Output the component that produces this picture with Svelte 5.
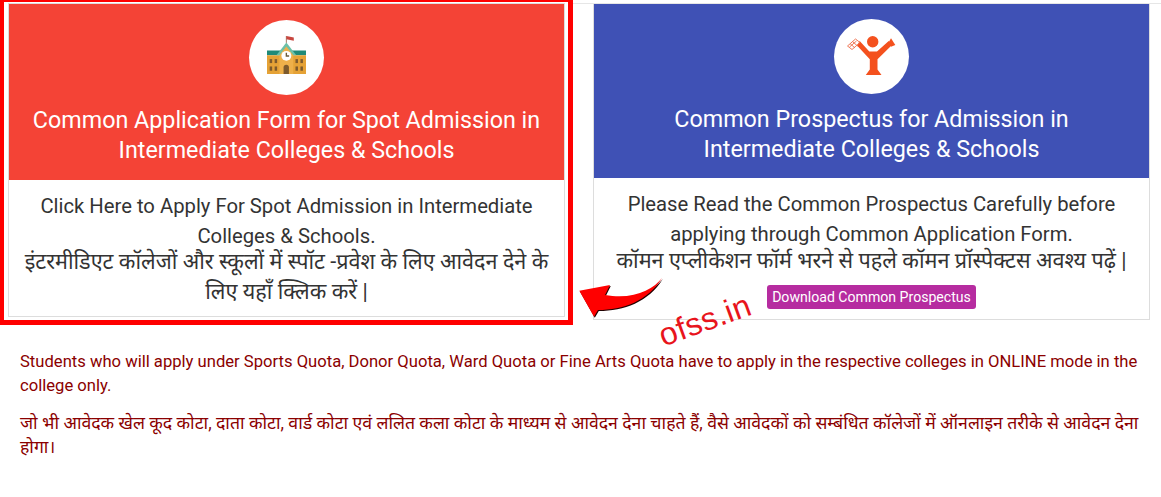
<script>
	const notes = [
		'Students who will apply under Sports Quota, Donor Quota, Ward Quota or Fine Arts Quota have to apply in the respective colleges in ONLINE mode in the college only.',
		'जो भी आवेदक खेल कूद कोटा, दाता कोटा, वार्ड कोटा एवं ललित कला कोटा के माध्यम से आवेदन देना चाहते हैं, वैसे आवेदकों को सम्बंधित कॉलेजों में ऑनलाइन तरीके से आवेदन देना होगा।'
	];
</script>

<div class="page">
	<div class="cards">
		<div class="frame">
			<div class="card">
				<div class="head red">
					<div class="circle">
						<svg class="school" width="39" height="38" viewBox="0 0 39.300 38.300">
							<path d="M19.500 0v7" stroke="#8a5a44" stroke-width="0.800" />
							<path d="M19.500 0l7.500 1.500v3.200l-7.500-1.500z" fill="#c8463f" />
							<path d="M0 14.500h39.300v5h-39.300z" fill="#1f8a78" />
							<path d="M0 19.500h39.300v18.800h-39.300z" fill="#e5a236" />
							<path d="M9.500 19.500l10-13 10 13z" fill="#6cc0a8" />
							<path d="M12.500 19.500l7-9 7 9v18.800h-14z" fill="#eeb04a" />
							<circle cx="19.500" cy="20" r="5" fill="#fff" />
							<path d="M19.500 17v3.200h2.800" stroke="#6b5a3a" stroke-width="1.400" fill="none" />
							<path d="M16.700 38.300v-6.500a2.700 2.700 0 0 1 5.400 0v6.500z" fill="#7d5a2c" />
							<g fill="#7d5a2c">
								<rect x="2.700" y="23.300" width="2.500" height="4" />
								<rect x="7.700" y="23.300" width="2.500" height="4" />
								<rect x="2.700" y="30.700" width="2.500" height="4.300" />
								<rect x="7.700" y="30.700" width="2.500" height="4.300" />
								<rect x="28.700" y="23.300" width="2.500" height="4" />
								<rect x="33.700" y="23.300" width="2.500" height="4" />
								<rect x="28.700" y="30.700" width="2.500" height="4.300" />
								<rect x="33.700" y="30.700" width="2.500" height="4.300" />
							</g>
						</svg>
					</div>
					<h2>Common Application Form for Spot Admission in Intermediate Colleges &amp; Schools</h2>
				</div>
				<div class="body">
					<p>Click Here to Apply For Spot Admission in Intermediate Colleges &amp; Schools.<br /><span class="hi first">इंटरमीडिएट कॉलेजों और स्कूलों में स्पॉट -प्रवेश के लिए आवेदन देने के लिए यहाँ क्लिक करें |</span></p>
				</div>
			</div>
		</div>

		<div class="card right">
			<div class="head blue">
				<div class="circle">
					<svg class="person" width="50" height="40" viewBox="0 0 50 40">
						<circle cx="25.700" cy="6.700" r="5.700" fill="#f4511e" />
						<path d="M12.700 6l9.600 10.500h7.700l11.700-10.500 2.800 4.500-14 13.800v10.200l4 5.500h-15.700l4-5.500v-10.200l-12.800-13.800z" fill="#f4511e" />
						<path d="M41.700 7.300l2.300-4 4.300 6.700-4.300 1.700z" fill="#f4511e" />
						<g fill="none" stroke="#ef7a5a" stroke-width="1">
							<path d="M0.500 11l8-7 4.500 3.500-8 7z" />
							<path d="M3 8.500l5 4.500M5.500 6.500l5 4.500M2.500 12l7-6" />
						</g>
					</svg>
				</div>
				<h2>Common Prospectus for Admission in Intermediate Colleges &amp; Schools</h2>
			</div>
			<div class="body">
				<p>Please Read the Common Prospectus Carefully before applying through Common Application Form.<br /><span class="hi">कॉमन एप्लीकेशन फॉर्म भरने से पहले कॉमन प्रॉस्पेक्टस अवश्य पढ़ें |</span></p>
				<a class="btn" href="#prospectus">Download Common Prospectus</a>
			</div>
		</div>

		<svg class="arrow" width="86" height="44" viewBox="0 0 86 44">
			<path d="M84 2C75 14 55 24 27 19L32 9 1.300 14.700 16 40.700 20 34C45 34 70 25 84 2z" fill="#200" transform="translate(0.800 1)" />
			<path d="M84 2C75 14 55 24 27 19L32 9 1.300 14.700 16 40.700 20 34C45 34 70 25 84 2z" fill="#f00" />
		</svg>
		<span class="mark">ofss.in</span>
	</div>

	<div class="notes">
		{#each notes as note}
			<p>{note}</p>
		{/each}
	</div>
</div>

<style>
	:global(body) {
		margin: 0;
		background: #fff;
		font-family: Roboto, "Noto Sans", sans-serif;
		overflow: hidden;
	}
	.page {
		width: 1161px;
		height: 497px;
	}
	.cards {
		position: relative;
		display: flex;
		align-items: flex-start;
		gap: 20px;
		height: 350px;
	}
	.cards::after {
		content: "";
		position: absolute;
		left: 573px;
		right: 0;
		top: 3px;
		height: 1px;
		background: #e6e6e6;
	}
	.frame {
		border: 5px solid #f00;
		border-left-width: 4px;
		border-top-width: 2px;
		padding: 1px 3px 3px 4px;
		box-sizing: border-box;
		width: 573px;
		height: 325px;
	}
	.card {
		border: 1px solid #ddd;
		box-sizing: border-box;
		background: #fff;
		height: 100%;
		text-align: center;
	}
	.right {
		width: 557px;
		height: 317px;
		margin-top: 3px;
	}
	.head {
		height: 176px;
		color: #fff;
		padding-top: 16px;
		box-sizing: border-box;
	}
	.red {
		background: #f44336;
	}
	.blue {
		background: #3f51b5;
		height: 174px;
		padding-top: 15px;
	}
	.circle {
		width: 75px;
		height: 75px;
		border-radius: 50%;
		background: #fff;
		margin: 0 auto;
		display: flex;
		align-items: center;
		justify-content: center;
	}
	.school {
		margin-bottom: 5px;
	}
	.person {
		margin-bottom: 3px;
	}
	h2 {
		margin: 10px 0 0;
		padding: 0 14px;
		font-size: 23.300px;
		line-height: 30px;
		font-weight: 400;
	}
	.body {
		padding: 11px 8px 0;
		color: #333;
	}
	.body p {
		margin: 0;
		font-size: 20.250px;
		line-height: 30px;
	}
	.hi {
		display: block;
		margin-top: -3px;
		font-size: 21.600px;
	}
	.hi.first {
		margin-top: -4px;
	}
	.btn {
		display: inline-block;
		margin-top: 9px;
		padding: 0 5px;
		background: #b62ca0;
		color: #fff;
		font-size: 14.100px;
		line-height: 24px;
		border-radius: 3px;
		text-decoration: none;
	}
	.arrow {
		position: absolute;
		left: 578px;
		top: 276px;
	}
	.mark {
		position: absolute;
		left: 657px;
		top: 302px;
		font-family: "Liberation Sans", sans-serif;
		font-size: 32px;
		letter-spacing: 0.5px;
		color: #e8141c;
		transform: rotate(-20deg);
	}
	.notes {
		padding: 0 19px 0 20px;
		color: #8b0000;
		font-size: 16.620px;
		line-height: 24px;
	}
	.notes p {
		margin: 0 0 13px;
	}
	.notes p:last-child {
		font-size: 17.650px;
	}
</style>
